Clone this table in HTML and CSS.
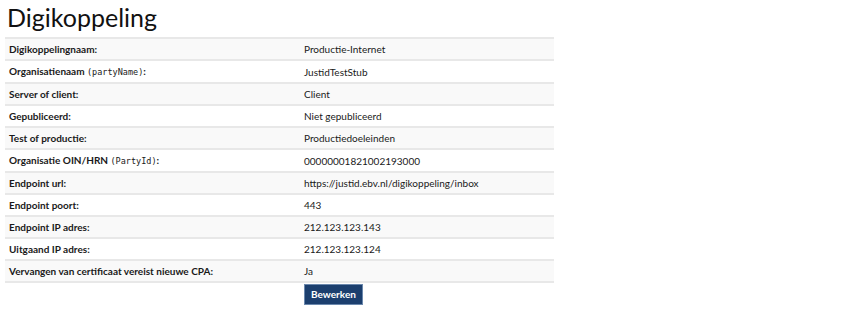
FILE: index.html
```html
<!DOCTYPE html>
<html lang="nl">
<head>
<meta charset="utf-8">
<title>Digikoppeling</title>
<link rel="stylesheet" href="styles.css">
</head>
<body>
<div class="page">
  <h1 class="title">Digikoppeling</h1>
  <table class="details">
    <colgroup><col class="col-label"><col class="col-value"></colgroup>
    <tbody>
      <tr><th>Digikoppelingnaam:</th><td>Productie-Internet</td></tr>
      <tr><th>Organisatienaam <code>(partyName)</code>:</th><td>JustidTestStub</td></tr>
      <tr><th>Server of client:</th><td>Client</td></tr>
      <tr><th>Gepubliceerd:</th><td>Niet gepubliceerd</td></tr>
      <tr><th>Test of productie:</th><td>Productiedoeleinden</td></tr>
      <tr><th>Organisatie OIN/HRN <code>(PartyId)</code>:</th><td>00000001821002193000</td></tr>
      <tr><th>Endpoint url:</th><td>https://justid.ebv.nl/digikoppeling/inbox</td></tr>
      <tr><th>Endpoint poort:</th><td>443</td></tr>
      <tr><th>Endpoint IP adres:</th><td>212.123.123.143</td></tr>
      <tr><th>Uitgaand IP adres:</th><td>212.123.123.124</td></tr>
      <tr><th>Vervangen van certificaat vereist nieuwe CPA:</th><td>Ja</td></tr>
      <tr class="actions"><th></th><td><button class="btn" type="button">Bewerken</button></td></tr>
    </tbody>
  </table>
</div>
</body>
</html>
```

FILE: styles.css
```css
html, body {
  margin: 0;
  padding: 0;
  background: #ffffff;
}

.page {
  padding: 0 5px;
  font-family: Lato, "Open Sans", sans-serif;
  color: #1a1a1a;
}

.title {
  margin: 0;
  padding: 3px 0 0 2px;
  height: 34px;
  font-size: 25px;
  font-weight: 400;
  line-height: 28px;
  color: #111111;
}

.details {
  width: 549px;
  table-layout: fixed;
  border-collapse: collapse;
  font-size: 10px;
}

.col-label {
  width: 295px;
}

.details th,
.details td {
  height: 20px;
  padding: 0 4px;
  border-top: 2px solid #e8e8e8;
  text-align: left;
  vertical-align: middle;
  line-height: 20px;
  white-space: nowrap;
}

.details th {
  font-weight: 700;
}

.details td {
  font-weight: 400;
}

.details tr:nth-child(odd) th,
.details tr:nth-child(odd) td {
  background: #f9f9f9;
}

.details code {
  font-family: "DejaVu Sans Mono", monospace;
  font-size: 8.5px;
  font-weight: 400;
}

.details tr.actions th,
.details tr.actions td {
  background: #ffffff;
  padding-top: 1px;
  height: auto;
}

.btn {
  display: block;
  height: 21px;
  padding: 0 6px;
  background: #1c3f6e;
  border: 1px solid #6b88ad;
  color: #ffffff;
  font-family: Lato, "Open Sans", sans-serif;
  font-size: 10px;
  font-weight: 700;
  line-height: 19px;
}
```
